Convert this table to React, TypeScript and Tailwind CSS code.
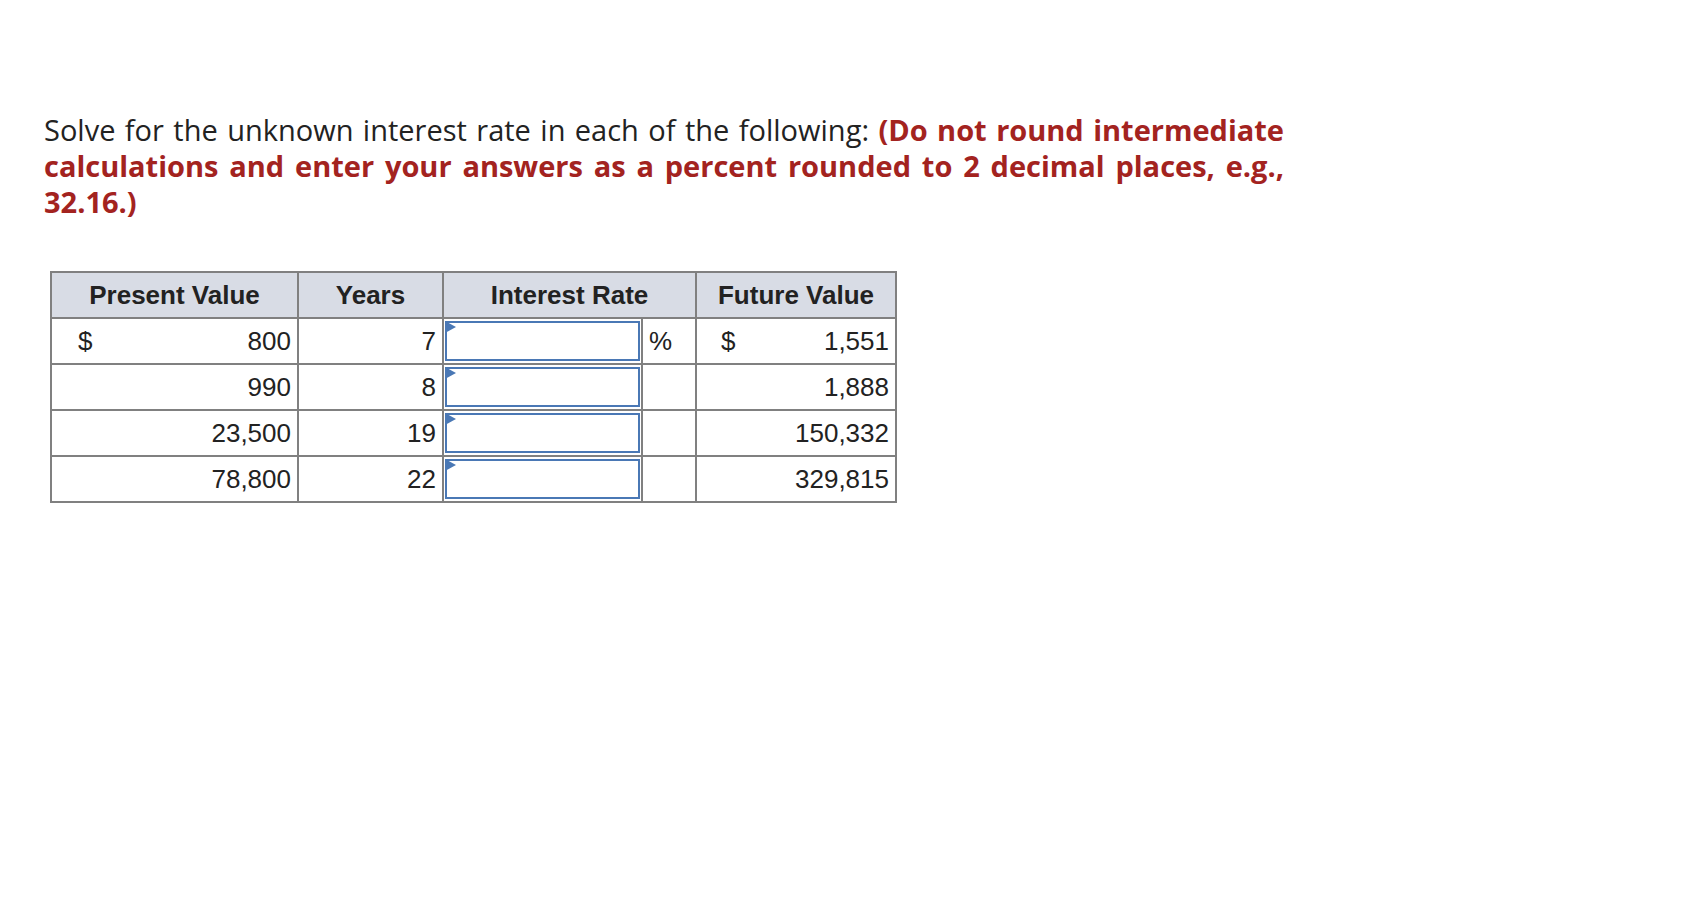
import React from 'react';

type Row = { pv: string; years: string; fv: string; sign?: boolean };

const rows: Row[] = [
  { pv: '800', years: '7', fv: '1,551', sign: true },
  { pv: '990', years: '8', fv: '1,888' },
  { pv: '23,500', years: '19', fv: '150,332' },
  { pv: '78,800', years: '22', fv: '329,815' },
];

const cell = 'border-2 border-[#808080] h-[46px] p-0 align-middle';

const App: React.FC = () => {
  return (
    <div className="min-h-screen w-full bg-white pt-[112px] pl-[44px]">
      {/* Instructions */}
      <p
        className="w-[1240px] text-justify text-[29px] leading-[36px] text-[#222222]"
        style={{ fontFamily: '"Open Sans", Lato, sans-serif' }}
      >
        Solve for the unknown interest rate in each of the following:{' '}
        <b className="font-bold text-[#a3231f]">
          (Do not round intermediate calculations and enter your answers as a percent rounded to 2 decimal places, e.g.,
          32.16.)
        </b>
      </p>

      {/* Table */}
      <table
        className="mt-[51px] ml-[6px] border-collapse text-[26px] text-[#222222]"
        style={{ fontFamily: '"Liberation Sans", Arial, sans-serif' }}
      >
        <colgroup>
          <col className="w-[247px]" />
          <col className="w-[145px]" />
          <col className="w-[199px]" />
          <col className="w-[54px]" />
          <col className="w-[200px]" />
        </colgroup>
        <thead>
          <tr className="bg-[#d8dce5]">
            <th className={`${cell} font-bold text-center`}>Present Value</th>
            <th className={`${cell} font-bold text-center`}>Years</th>
            <th className={`${cell} font-bold text-center`} colSpan={2}>Interest Rate</th>
            <th className={`${cell} font-bold text-center`}>Future Value</th>
          </tr>
        </thead>
        <tbody>
          {rows.map((r, i) => (
            <tr key={i}>
              <td className={cell}>
                <div className="flex items-center justify-between pl-[26px] pr-[6px]">
                  <span>{r.sign ? '$' : ''}</span>
                  <span>{r.pv}</span>
                </div>
              </td>
              <td className={`${cell} text-right pr-[6px]`}>{r.years}</td>
              <td className={cell}>
                <div className="relative m-[1px] h-[40px] border-2 border-[#4a78b5] bg-white">
                  <span className="absolute -left-[2px] -top-[2px] h-0 w-0 border-y-[6px] border-l-[11px] border-y-transparent border-l-[#4a78b5]" />
                </div>
              </td>
              <td className={`${cell} pl-[6px]`}>{r.sign ? '%' : ''}</td>
              <td className={cell}>
                <div className="flex items-center justify-between pl-[24px] pr-[6px]">
                  <span>{r.sign ? '$' : ''}</span>
                  <span>{r.fv}</span>
                </div>
              </td>
            </tr>
          ))}
        </tbody>
      </table>
    </div>
  );
};

export default App;
